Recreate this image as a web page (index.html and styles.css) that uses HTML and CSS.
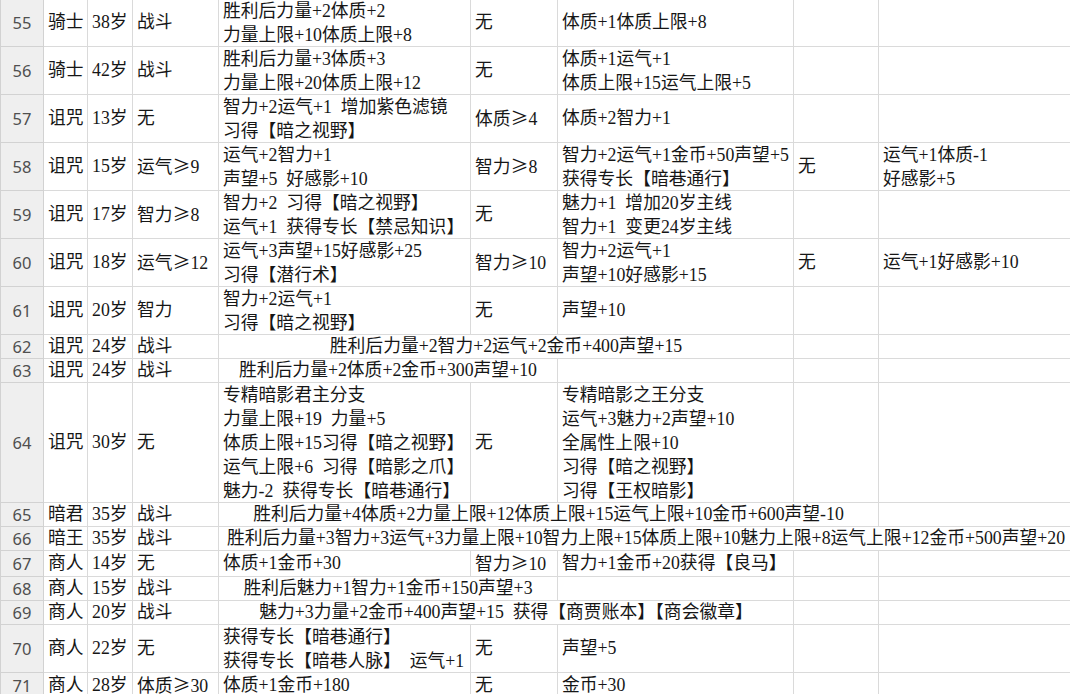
FILE: index.html
```html
<!DOCTYPE html>
<html lang="zh-CN">
<head>
<meta charset="utf-8">
<title>表格</title>
<link rel="stylesheet" href="styles.css">
</head>
<body>
<table class="sheet">
<colgroup>
<col class="c-hd"><col class="c-b"><col class="c-c"><col class="c-d"><col class="c-e"><col class="c-f"><col class="c-g"><col class="c-h"><col class="c-i">
</colgroup>
<tbody>
<tr class="r2"><th>55</th><td>骑士</td><td>38岁</td><td>战斗</td><td><div class="ml">胜利后力量+2体质+2<br>力量上限+10体质上限+8</div></td><td>无</td><td>体质+1体质上限+8</td><td></td><td></td></tr>
<tr class="r2"><th>56</th><td>骑士</td><td>42岁</td><td>战斗</td><td><div class="ml">胜利后力量+3体质+3<br>力量上限+20体质上限+12</div></td><td>无</td><td><div class="ml">体质+1运气+1<br>体质上限+15运气上限+5</div></td><td></td><td></td></tr>
<tr class="r2"><th>57</th><td>诅咒</td><td>13岁</td><td>无</td><td><div class="ml">智力+2运气+1&ensp;增加紫色滤镜<br>习得【暗之视野】</div></td><td>体质<span class="cj">≥</span>4</td><td>体质+2智力+1</td><td></td><td></td></tr>
<tr class="r2"><th>58</th><td>诅咒</td><td>15岁</td><td>运气<span class="cj">≥</span>9</td><td><div class="ml">运气+2智力+1<br>声望+5&ensp;好感影+10</div></td><td>智力<span class="cj">≥</span>8</td><td><div class="ml">智力+2运气+1金币+50声望+5<br>获得专长【暗巷通行】</div></td><td>无</td><td><div class="ml">运气+1体质-1<br>好感影+5</div></td></tr>
<tr class="r2"><th>59</th><td>诅咒</td><td>17岁</td><td>智力<span class="cj">≥</span>8</td><td><div class="ml">智力+2&ensp;习得【暗之视野】<br>运气+1&ensp;获得专长【禁忌知识】</div></td><td>无</td><td><div class="ml">魅力+1&ensp;增加20岁主线<br>智力+1&ensp;变更24岁主线</div></td><td></td><td></td></tr>
<tr class="r2"><th>60</th><td>诅咒</td><td>18岁</td><td>运气<span class="cj">≥</span>12</td><td><div class="ml">运气+3声望+15好感影+25<br>习得【潜行术】</div></td><td>智力<span class="cj">≥</span>10</td><td><div class="ml">智力+2运气+1<br>声望+10好感影+15</div></td><td>无</td><td>运气+1好感影+10</td></tr>
<tr class="r2"><th>61</th><td>诅咒</td><td>20岁</td><td>智力</td><td><div class="ml">智力+2运气+1<br>习得【暗之视野】</div></td><td>无</td><td>声望+10</td><td></td><td></td></tr>
<tr class="r1"><th>62</th><td>诅咒</td><td>24岁</td><td>战斗</td><td class="mg" colspan="3">胜利后力量+2智力+2运气+2金币+400声望+15</td><td></td><td></td></tr>
<tr class="r1"><th>63</th><td>诅咒</td><td>24岁</td><td>战斗</td><td class="mg" colspan="2">胜利后力量+2体质+2金币+300声望+10</td><td></td><td></td><td></td></tr>
<tr class="r5"><th>64</th><td>诅咒</td><td>30岁</td><td>无</td><td><div class="ml">专精暗影君主分支<br>力量上限+19&ensp;力量+5<br>体质上限+15习得【暗之视野】<br>运气上限+6&ensp;习得【暗影之爪】<br>魅力-2&ensp;获得专长【暗巷通行】</div></td><td>无</td><td><div class="ml">专精暗影之王分支<br>运气+3魅力+2声望+10<br>全属性上限+10<br>习得【暗之视野】<br>习得【王权暗影】</div></td><td></td><td></td></tr>
<tr class="r1"><th>65</th><td>暗君</td><td>35岁</td><td>战斗</td><td class="mg" colspan="4">胜利后力量+4体质+2力量上限+12体质上限+15运气上限+10金币+600声望-10</td><td></td></tr>
<tr class="r1"><th>66</th><td>暗王</td><td>35岁</td><td>战斗</td><td class="mg" colspan="5">胜利后力量+3智力+3运气+3力量上限+10智力上限+15体质上限+10魅力上限+8运气上限+12金币+500声望+20</td></tr>
<tr class="r1"><th>67</th><td>商人</td><td>14岁</td><td>无</td><td>体质+1金币+30</td><td>智力<span class="cj">≥</span>10</td><td>智力+1金币+20获得【良马】</td><td></td><td></td></tr>
<tr class="r1"><th>68</th><td>商人</td><td>15岁</td><td>战斗</td><td class="mg" colspan="2">胜利后魅力+1智力+1金币+150声望+3</td><td></td><td></td><td></td></tr>
<tr class="r1"><th>69</th><td>商人</td><td>20岁</td><td>战斗</td><td class="mg" colspan="3">魅力+3力量+2金币+400声望+15&ensp;获得【商贾账本】【商会徽章】</td><td></td><td></td></tr>
<tr class="r2"><th>70</th><td>商人</td><td>22岁</td><td>无</td><td><div class="ml">获得专长【暗巷通行】<br>获得专长【暗巷人脉】&ensp;运气+1</div></td><td>无</td><td>声望+5</td><td></td><td></td></tr>
<tr class="r1"><th>71</th><td>商人</td><td>28岁</td><td>体质<span class="cj">≥</span>30</td><td>体质+1金币+180</td><td>无</td><td>金币+30</td><td></td><td></td></tr>
</tbody>
</table>
</body>
</html>
```

FILE: styles.css
```css
html, body {
  margin: 0;
  padding: 0;
  background: #ffffff;
  overflow: hidden;
}

.sheet {
  border-collapse: collapse;
  table-layout: fixed;
  width: 1073px;
  margin-top: -2px;
  font-family: "Liberation Serif", "Noto Sans CJK SC", serif;
  font-size: 17.8px;
  color: #161616;
}

.c-hd { width: 43px; }
.c-b { width: 44px; }
.c-c { width: 45px; }
.c-d { width: 86px; }
.c-e { width: 252px; }
.c-f { width: 87px; }
.c-g { width: 236px; }
.c-h { width: 85px; }
.c-i { width: 195px; }

.r1 { height: 24px; }
.r2 { height: 48px; }
.r5 { height: 120px; }

.sheet td,
.sheet th {
  border: 1px solid #dadada;
  padding: 0 0 0 4px;
  line-height: 23px;
  white-space: nowrap;
  vertical-align: middle;
  text-align: left;
  overflow: visible;
}

.sheet th {
  background: #efefef;
  color: #505050;
  font-family: "Noto Sans", "Liberation Sans", sans-serif;
  font-weight: normal;
  font-size: 16.5px;
  text-align: center;
  padding: 0;
  border-color: #d2d2d2;
}

.sheet td.mg {
  text-align: center;
  padding: 0;
}

.ml {
  line-height: 24px;
  margin-bottom: -1px;
}

.cj {
  font-family: "Noto Sans CJK SC", sans-serif;
}
```
